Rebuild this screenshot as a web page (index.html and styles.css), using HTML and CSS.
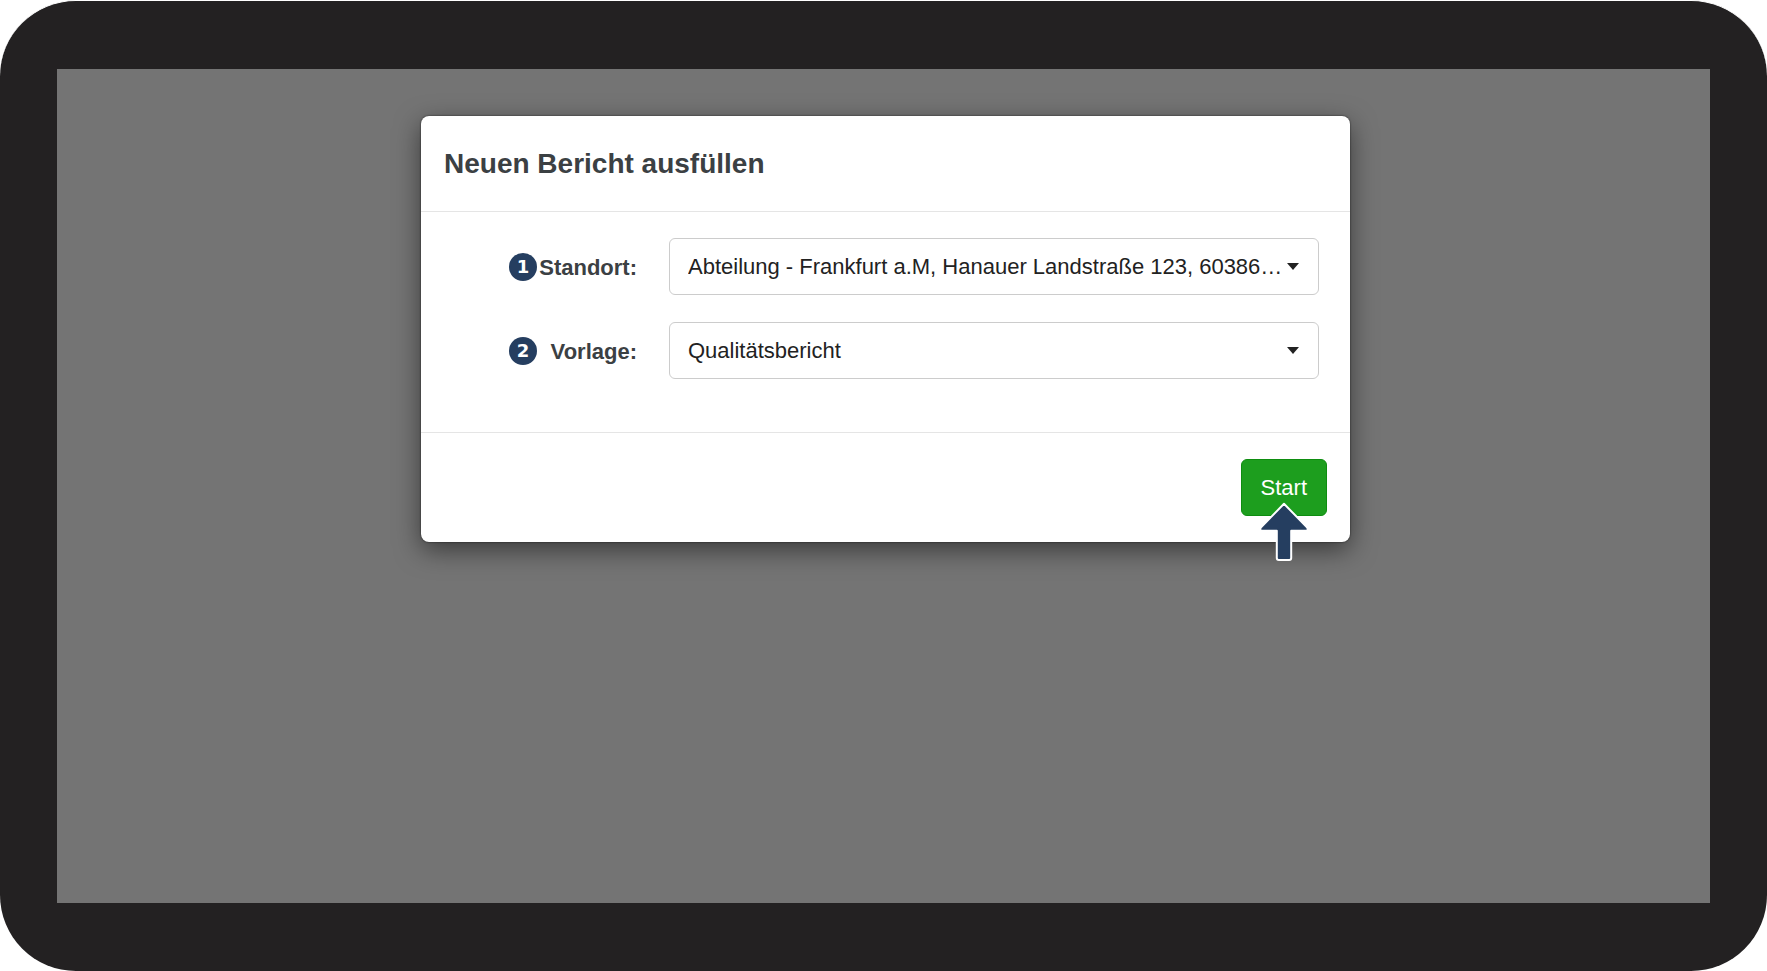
FILE: index.html
```html
<!DOCTYPE html>
<html lang="de">
<head>
<meta charset="utf-8">
<title>Neuen Bericht ausfüllen</title>
<link rel="stylesheet" href="styles.css">
</head>
<body>
<div class="device">
  <main class="screen">
    <form class="modal" role="dialog" aria-labelledby="modal-title">
      <header class="modal-header">
        <h1 class="modal-title" id="modal-title">Neuen Bericht ausfüllen</h1>
      </header>
      <div class="modal-body">
        <div class="field">
          <span class="step">1</span>
          <label class="label" for="standort">Standort:</label>
          <div class="select-wrap">
            <select class="select" id="standort">
              <option>Abteilung - Frankfurt a.M, Hanauer Landstraße 123, 60386…</option>
            </select>
            <svg class="caret" viewBox="0 0 12 7" aria-hidden="true"><path d="M0 0h12L6 7z"/></svg>
          </div>
        </div>
        <div class="field">
          <span class="step">2</span>
          <label class="label" for="vorlage">Vorlage:</label>
          <div class="select-wrap">
            <select class="select" id="vorlage">
              <option>Qualitätsbericht</option>
            </select>
            <svg class="caret" viewBox="0 0 12 7" aria-hidden="true"><path d="M0 0h12L6 7z"/></svg>
          </div>
        </div>
      </div>
      <footer class="modal-footer">
        <div class="action">
          <button class="start" type="button">Start</button>
          <svg class="pointer" viewBox="0 0 50 60" aria-hidden="true"><path d="M25 1.800L48.200 25.500Q49.700 28.500 46.700 28.800H32.200V56Q32.200 58 30.200 58H19.800Q17.800 58 17.800 56V28.800H3.300Q.3 28.500 1.800 25.500Z"/></svg>
        </div>
      </footer>
    </form>
  </main>
</div>
</body>
</html>
```

FILE: styles.css
```css
*, *::before, *::after {
  box-sizing: border-box;
}

body {
  margin: 0;
  background: #fff;
  color: #3b4043;
  font-family: "Liberation Sans", Arial, sans-serif;
  font-size: 22px;
}

.device {
  display: flex;
  min-height: 100vh;
  padding: 68px 57px;
  border-top: 1px solid #fff;
  border-radius: 76px;
  background: #232122;
}

.screen {
  display: flex;
  flex: 1;
  align-items: flex-start;
  justify-content: center;
  padding: 47px 0 0 4px;
  background: #747474;
}

.modal {
  width: 100%;
  max-width: 929px;
  border-radius: 8px;
  background: #fff;
  box-shadow: 0 8px 26px rgba(0, 0, 0, .5), 0 0 2px rgba(0, 0, 0, .7);
}

.modal-header {
  padding: 30px 23px 29px;
  border-bottom: 1px solid #e5e5e5;
}

.modal-title {
  margin: 0;
  font-size: 28px;
  line-height: 36px;
}

.modal-body {
  display: grid;
  gap: 27px;
  padding: 26px 31px 53px 88px;
}

.field {
  display: grid;
  grid-template-columns: 28px 100px 1fr;
  align-items: center;
}

.step {
  width: 28px;
  height: 28px;
  border-radius: 50%;
  background: #253e60;
  color: #fff;
  font: bold 18px/28px "DejaVu Sans", sans-serif;
  text-align: center;
}

.label {
  padding-top: 2px;
  font-weight: bold;
  text-align: right;
}

.select-wrap {
  position: relative;
  margin-left: 32px;
}

.select {
  display: block;
  width: 100%;
  height: 57px;
  padding: 0 32px 0 18px;
  appearance: none;
  border: 1px solid #ccc;
  border-radius: 6px;
  background: #fff;
  color: #222;
  font: inherit;
}

.caret {
  position: absolute;
  top: 25px;
  right: 20px;
  width: 12px;
  height: 7px;
  fill: #222;
  pointer-events: none;
}

.modal-footer {
  display: flex;
  justify-content: flex-end;
  padding: 26px 23px;
  border-top: 1px solid #e5e5e5;
}

.action {
  position: relative;
}

.start {
  display: block;
  height: 57px;
  padding: 0 19px;
  border: 1px solid #0e8d10;
  border-radius: 6px;
  background: #1d9e1e;
  color: #fff;
  font: inherit;
}

.pointer {
  position: absolute;
  top: 43px;
  left: calc(50% - 25px);
  width: 50px;
  height: 60px;
  fill: #253e60;
  stroke: #fff;
  stroke-width: 2;
  stroke-linejoin: round;
}
```
